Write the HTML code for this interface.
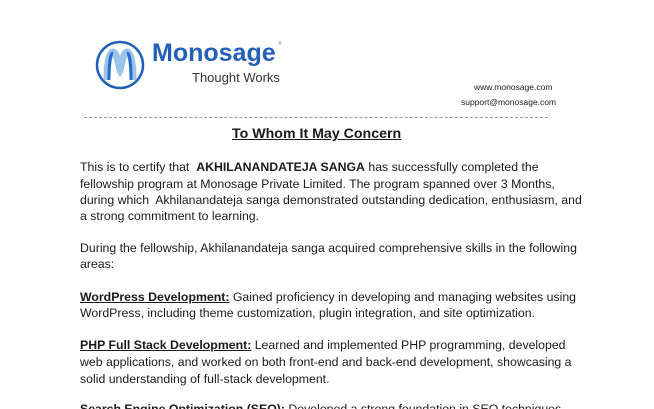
<!DOCTYPE html>
<html><head><meta charset="utf-8"><style>
html,body{margin:0;padding:0;background:#fff;width:654px;height:409px;overflow:hidden;position:relative;font-family:"Liberation Sans",Arial,sans-serif;color:#1a1a1a}
.l{position:absolute;left:80px;font-size:12.3px;white-space:nowrap;line-height:14px}
b{font-weight:bold}
.u{text-decoration:underline}
</style></head><body>
<svg style="position:absolute;left:95px;top:40px" width="50" height="50" viewBox="0 0 50 50">
<circle cx="25" cy="25" r="23" fill="none" stroke="#1f5fb4" stroke-width="2.5"/>
<path d="M12 40 C12 25 14 12 18 12 C22 12 24 28 25 30 C26 28 28 12 32 12 C36 12 38 25 38 40" fill="none" stroke="#9cc3ea" stroke-width="7"/>
<path d="M14 40 C14 25 15 13 18 13 M32 13 C35 13 36 25 36 40" fill="none" stroke="#2a6cc4" stroke-width="3"/>
</svg>
<div style="position:absolute;left:152px;top:39px;font-size:25px;font-weight:bold;color:#2260b5">Monosage</div>
<div style="position:absolute;left:278px;top:41px;font-size:5px;color:#888">®</div>
<div style="position:absolute;left:192px;top:70px;font-size:13px;color:#333">Thought Works</div>
<div style="position:absolute;left:474px;top:82px;font-size:8.5px;color:#222">www.monosage.com</div>
<div style="position:absolute;left:461px;top:97px;font-size:8.5px;color:#222">support@monosage.com</div>
<div style="position:absolute;left:84px;top:117px;width:464px;border-top:1px dashed #999"></div>
<div style="position:absolute;left:232px;top:126px;font-size:14.2px;font-weight:bold;text-decoration:underline">To Whom It May Concern</div>
<div class="l" style="top:160px">This is to certify that&nbsp; <b>AKHILANANDATEJA SANGA</b> has successfully completed the</div>
<div class="l" style="top:177px">fellowship program at Monosage Private Limited. The program spanned over 3 Months,</div>
<div class="l" style="top:193px">during which&nbsp; Akhilanandateja sanga demonstrated outstanding dedication, enthusiasm, and</div>
<div class="l" style="top:209px">a strong commitment to learning.</div>
<div class="l" style="top:241px">During the fellowship, Akhilanandateja sanga acquired comprehensive skills in the following</div>
<div class="l" style="top:257px">areas:</div>
<div class="l" style="top:290px"><b class="u">WordPress Development:</b> Gained proficiency in developing and managing websites using</div>
<div class="l" style="top:306px">WordPress, including theme customization, plugin integration, and site optimization.</div>
<div class="l" style="top:338px"><b class="u">PHP Full Stack Development:</b> Learned and implemented PHP programming, developed</div>
<div class="l" style="top:355px">web applications, and worked on both front-end and back-end development, showcasing a</div>
<div class="l" style="top:372px">solid understanding of full-stack development.</div>
<div class="l" style="top:402px"><b class="u">Search Engine Optimization (SEO):</b> Developed a strong foundation in SEO techniques</div>
</body></html>
